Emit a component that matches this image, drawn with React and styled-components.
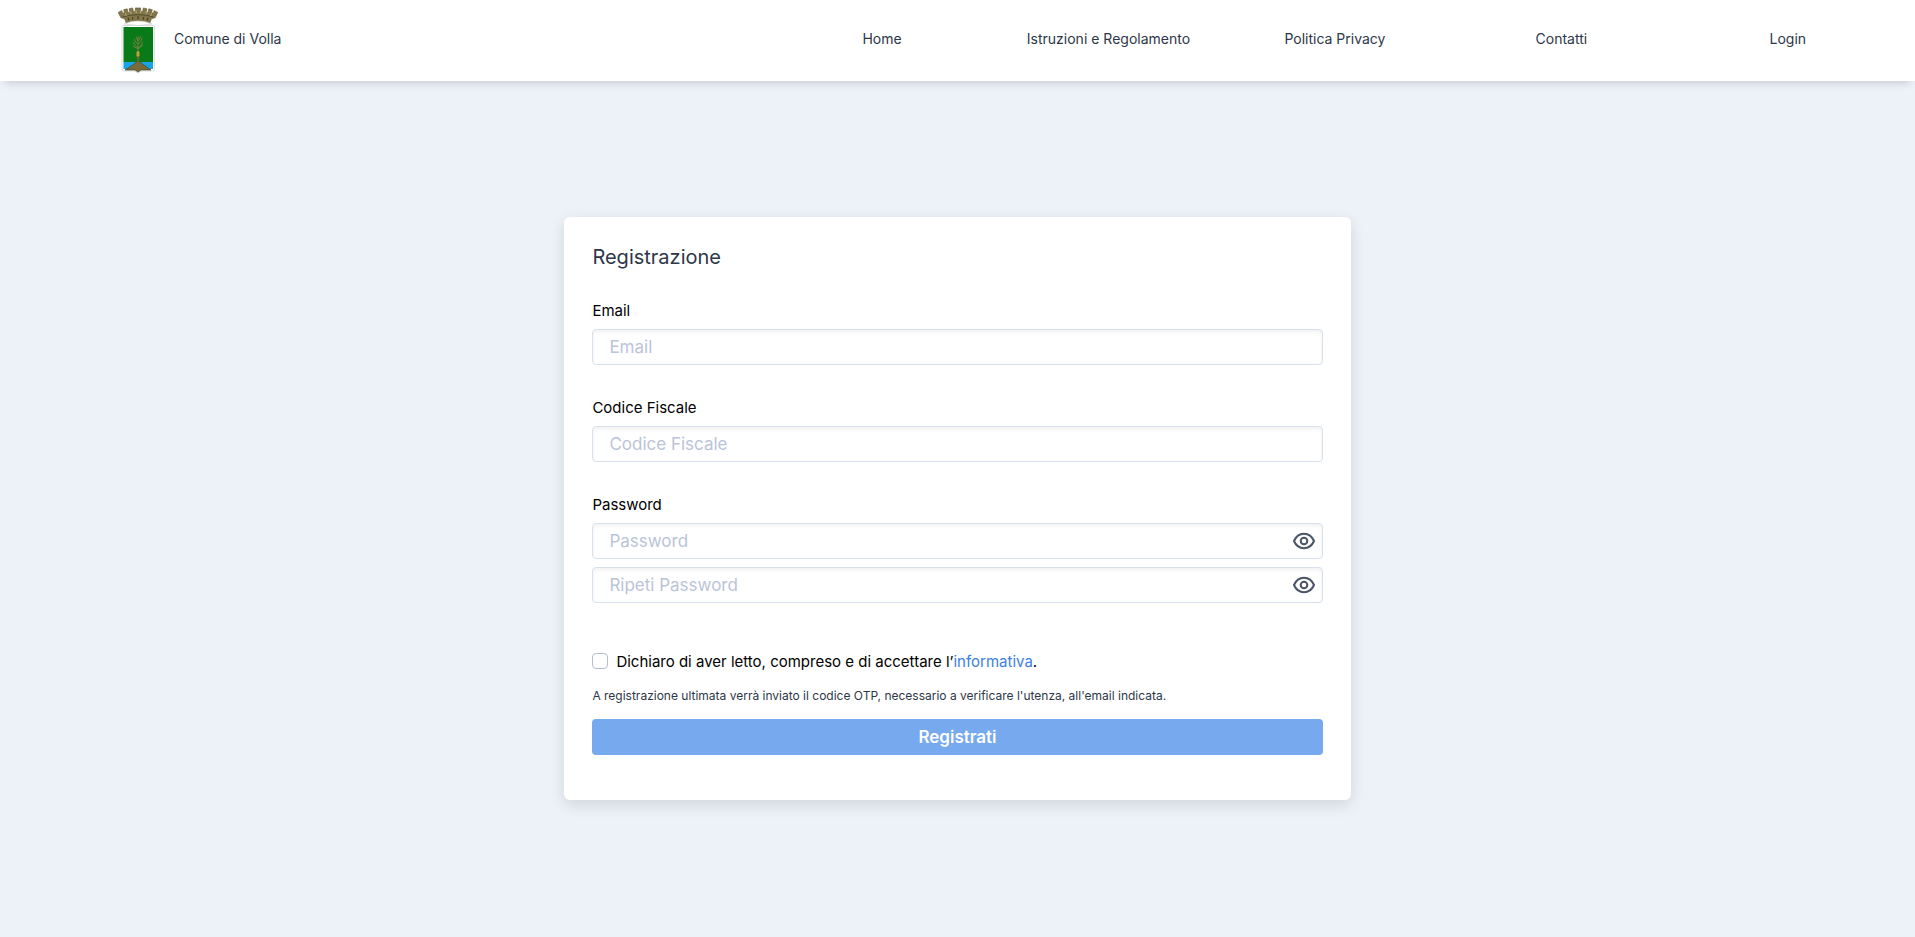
import React, { useState } from 'react';
import styled, { createGlobalStyle } from 'styled-components';

const GlobalStyle = createGlobalStyle`
  *, *::before, *::after {
    box-sizing: border-box;
  }

  body {
    margin: 0;
    background: #edf2f9;
    color: #2d3748;
    font-family: Inter, 'Open Sans', sans-serif;
    font-size: 14px;
    line-height: 21px;
  }

  input, button {
    font-family: inherit;
  }
`;

const Page = styled.div`
  display: flex;
  flex-direction: column;
  min-height: 100vh;
`;

const Header = styled.header`
  display: flex;
  align-items: center;
  height: 81px;
  padding: 0 14px 4px;
  background: #ffffff;
  box-shadow: 0 7px 8px -5px rgba(0, 0, 0, 0.17);
`;

const BrandArea = styled.div`
  display: flex;
  width: 40%;
  padding-left: 102px;
`;

const Brand = styled.a`
  display: flex;
  align-items: center;
  gap: 14px;
  color: inherit;
  text-decoration: none;
`;

const Nav = styled.nav`
  display: flex;
  width: 60%;
`;

const NavLink = styled.a`
  flex: 1 1 0;
  color: inherit;
  text-align: center;
  text-decoration: none;
  white-space: nowrap;
`;

const Main = styled.main`
  display: flex;
  flex: 1;
  align-items: center;
  justify-content: center;
  padding: 14px 14px 16px;
`;

const Card = styled.form`
  width: calc(100% * 5 / 12);
  min-width: 320px;
  padding: 28px 28px 45px;
  border-radius: 6px;
  background: #ffffff;
  box-shadow: 0 5px 15px rgba(0, 0, 0, 0.12);
`;

const Title = styled.h1`
  margin: 0 0 31px;
  font-size: 20px;
  font-weight: 400;
  line-height: 24px;
`;

const Field = styled.div`
  display: flex;
  flex-direction: column;
  gap: 8px;
  margin-bottom: 32px;
`;

const Label = styled.label`
  color: #000000;
  font-size: 15px;
  line-height: 21px;
`;

const InputBox = styled.div`
  display: flex;
  align-items: center;
  height: 36px;
  padding-right: 6px;
  border: 1px solid #d7e1ee;
  border-radius: 4px;
  background: #ffffff;
  box-shadow: inset 0 2px 4px rgba(0, 0, 0, 0.06);
`;

const Input = styled.input`
  flex: 1;
  min-width: 0;
  height: 100%;
  padding: 0 16px;
  border: 0;
  outline: 0;
  background: transparent;
  color: #2d3748;
  font-size: 17px;

  &::placeholder {
    color: #bac4d8;
    opacity: 1;
  }
`;

const EyeButton = styled.button`
  display: flex;
  padding: 0;
  border: 0;
  background: transparent;
  color: #4a5568;
  cursor: pointer;
`;

const Consent = styled.div`
  display: flex;
  align-items: center;
  gap: 8px;
  margin: 48px 0 14px;
  color: #000000;
  font-size: 15px;
`;

const Checkbox = styled.input`
  appearance: none;
  width: 16px;
  height: 16px;
  margin: 0;
  border: 1px solid #b3bfd1;
  border-radius: 4px;
  background: #ffffff;

  &:checked {
    background: #3182ce;
  }
`;

const TextLink = styled.a`
  color: #3c7fe0;
  text-decoration: none;
`;

const Note = styled.p`
  margin: 0 0 14px;
  font-size: 12px;
  line-height: 19px;
`;

const SubmitButton = styled.button`
  display: block;
  width: 100%;
  height: 36px;
  border: 0;
  border-radius: 4px;
  background: #76a9ee;
  color: #ffffff;
  font-size: 17px;
  font-weight: 600;
`;

const links = ['Home', 'Istruzioni e Regolamento', 'Politica Privacy', 'Contatti', 'Login'];

const Crest = () => (
  <svg width="44" height="70" viewBox="0 0 44 70" fill="none" aria-hidden="true">
    {/* mural crown */}
    <g transform="translate(2.2 3) scale(0.9)">
      <path
        d="M0 6l4-2 1 3 2-1-1-3 4-1 1 4h2l-1-4 4-1 1 4h2V1h6v4h2l1-4 4 1-1 4h2l1-4 4 1-1 3 2 1 1-3 4 2-3 6-4 1-2 5q-13-5-26 0l-2-5-4-1z"
        fill="#83764a"
        stroke="#5b5132"
        strokeWidth="0.6"
      />
      <path d="M5 11q17-5 34 0" stroke="#4a4129" strokeWidth="0.9" />
      <path d="M11 12l1 3M16 11v3M22 10v4M28 11v3M33 12l-1 3" stroke="#4a4129" strokeWidth="1.4" />
      <path d="M8 7l1 3M14 5v3M20 4v3M25 4v3M31 5v3M37 7l-1 3" stroke="#c2b47e" strokeWidth="1" />
    </g>
    <path d="M8 20q14-6 28 0-14 3-28 0z" fill="#ffffff" stroke="#d5dad0" strokeWidth="0.8" />
    {/* shield */}
    <path
      d="M6.5 21.5h31q.8 0 .8.8V65q0 2-2 2H25l-3 2-3-2H8q-2 0-2-2V22q0-.5.5-.5z"
      fill="#ffffff"
      stroke="#ccd4cf"
      strokeWidth="0.8"
    />
    <path d="M7.5 23h29.5v35H7.5z" fill="#087a18" />
    <path d="M7.5 58h29.5v7H7.5z" fill="#17a3e6" />
    <path d="M22 56.5l5 4 8 5.5H25l-3 2-3-2H9l8-5z" fill="#7a6a3b" stroke="#3d4b27" strokeWidth="0.7" />
    {/* corn plant */}
    <path d="M22 57V32" stroke="#6d7438" strokeWidth="1.2" />
    <path
      d="M22 44q-3-2-5-6M22 44q3-2 5-6M22 40q-3-1-4-5M22 40q3-1 4-6M22 45l-5-3M22 45l5-4M22 37l-2-4M22 37l3-5"
      stroke="#7b8546"
      strokeWidth="0.9"
    />
    <path d="M20.5 48q1.5-2 3 0v4q-1.5 2-3 0z" fill="#c4a137" />
    <path d="M20.5 53h3M21 55h2" stroke="#7d6a2c" strokeWidth="1" />
  </svg>
);

const EyeIcon = () => (
  <svg width="24" height="24" viewBox="0 0 24 24" fill="none" stroke="currentColor" strokeWidth="2" aria-hidden="true">
    <path d="M2 12C3.7 8 7.5 4.8 12 4.8S20.3 8 22 12c-1.7 4-5.5 7.2-10 7.2S3.7 16 2 12z" strokeLinejoin="round" />
    <circle cx="12" cy="12" r="3.3" />
  </svg>
);

const PasswordInput = ({ id, placeholder, ...rest }) => {
  const [visible, setVisible] = useState(false);

  return (
    <InputBox>
      <Input id={id} type={visible ? 'text' : 'password'} placeholder={placeholder} {...rest} />
      <EyeButton type="button" aria-label="Mostra password" onClick={() => setVisible(!visible)}>
        <EyeIcon />
      </EyeButton>
    </InputBox>
  );
};

const App = () => (
  <Page>
    <GlobalStyle />
    <Header>
      <BrandArea>
        <Brand href="#">
          <Crest />
          Comune di Volla
        </Brand>
      </BrandArea>
      <Nav>
        {links.map((link) => (
          <NavLink key={link} href="#">
            {link}
          </NavLink>
        ))}
      </Nav>
    </Header>
    <Main>
      <Card onSubmit={(e) => e.preventDefault()}>
        <Title>Registrazione</Title>
        <Field>
          <Label htmlFor="email">Email</Label>
          <InputBox>
            <Input id="email" type="email" placeholder="Email" />
          </InputBox>
        </Field>
        <Field>
          <Label htmlFor="cf">Codice Fiscale</Label>
          <InputBox>
            <Input id="cf" type="text" placeholder="Codice Fiscale" />
          </InputBox>
        </Field>
        <Field>
          <Label htmlFor="password">Password</Label>
          <PasswordInput id="password" placeholder="Password" />
          <PasswordInput id="password2" placeholder="Ripeti Password" aria-label="Ripeti Password" />
        </Field>
        <Consent>
          <Checkbox id="consent" type="checkbox" />
          <label htmlFor="consent">
            Dichiaro di aver letto, compreso e di accettare l’<TextLink href="#">informativa</TextLink>.
          </label>
        </Consent>
        <Note>
          A registrazione ultimata verrà inviato il codice OTP, necessario a verificare l'utenza, all'email indicata.
        </Note>
        <SubmitButton type="submit">Registrati</SubmitButton>
      </Card>
    </Main>
  </Page>
);

export default App;
